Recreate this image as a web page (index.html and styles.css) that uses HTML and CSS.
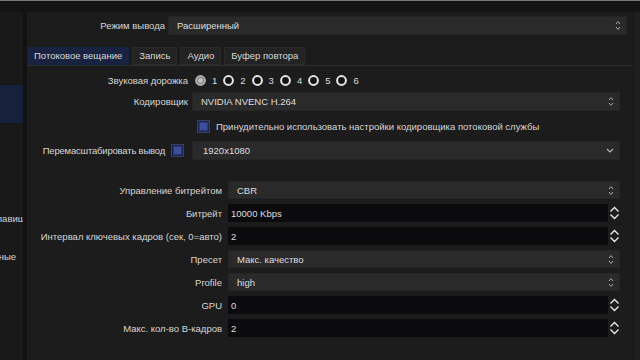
FILE: index.html
```html
<!DOCTYPE html>
<html lang="ru">
<head>
    <meta charset="UTF-8">
    <meta name="viewport" content="width=device-width, initial-scale=1.0">
    <title>Настройки — Вывод</title>
    <link rel="stylesheet" href="styles.css">
</head>
<body>

    <div class="topbar"></div>

    <div class="window">

        <aside class="sidebar">
            <ul class="nav">
                <li></li>
                <li></li>
                <li class="active"></li>
                <li></li>
                <li></li>
                <li>Горячие клавиши</li>
                <li>Расширенные</li>
            </ul>
        </aside>

        <main class="settings">

            <div class="form form-top">
                <label class="lbl">Режим вывода</label>
                <div class="combo">
                    <span>Расширенный</span>
                    <svg class="updown" width="6" height="11" viewBox="0 0 6 11"><path d="M1 4 L3 1.6 L5 4 M1 7 L3 9.4 L5 7"/></svg>
                </div>
            </div>

            <div class="tabs">
                <div class="tab active">Потоковое вещание</div>
                <div class="tab">Запись</div>
                <div class="tab">Аудио</div>
                <div class="tab">Буфер повтора</div>
            </div>

            <div class="form form-stream">
                <label class="lbl">Звуковая дорожка</label>
                <div class="radios">
                    <span class="radio checked"><svg width="11" height="11" viewBox="0 0 11 11"><circle cx="5.5" cy="5.5" r="4.6" class="ring-on"/><circle cx="5.5" cy="5.5" r="2.3" class="dot"/></svg>1</span>
                    <span class="radio"><svg width="11" height="11" viewBox="0 0 11 11"><circle cx="5.5" cy="5.5" r="4.4" class="ring"/></svg>2</span>
                    <span class="radio"><svg width="11" height="11" viewBox="0 0 11 11"><circle cx="5.5" cy="5.5" r="4.4" class="ring"/></svg>3</span>
                    <span class="radio"><svg width="11" height="11" viewBox="0 0 11 11"><circle cx="5.5" cy="5.5" r="4.4" class="ring"/></svg>4</span>
                    <span class="radio"><svg width="11" height="11" viewBox="0 0 11 11"><circle cx="5.5" cy="5.5" r="4.4" class="ring"/></svg>5</span>
                    <span class="radio"><svg width="11" height="11" viewBox="0 0 11 11"><circle cx="5.5" cy="5.5" r="4.4" class="ring"/></svg>6</span>
                </div>

                <label class="lbl">Кодировщик</label>
                <div class="combo">
                    <span>NVIDIA NVENC H.264</span>
                    <svg class="updown" width="6" height="11" viewBox="0 0 6 11"><path d="M1 4 L3 1.6 L5 4 M1 7 L3 9.4 L5 7"/></svg>
                </div>

                <div class="check">
                    <span class="box"></span>
                    <span>Принудительно использовать настройки кодировщика потоковой службы</span>
                </div>

                <div class="lbl rescale">
                    <span>Перемасштабировать вывод</span>
                    <span class="box"></span>
                </div>
                <div class="combo editable">
                    <span>1920x1080</span>
                    <svg class="chevron" width="8" height="5" viewBox="0 0 8 5"><path d="M1 1 L4 4 L7 1"/></svg>
                </div>
            </div>

            <div class="form form-enc">
                <label class="lbl">Управление битрейтом</label>
                <div class="combo">
                    <span>CBR</span>
                    <svg class="updown" width="6" height="11" viewBox="0 0 6 11"><path d="M1 4 L3 1.6 L5 4 M1 7 L3 9.4 L5 7"/></svg>
                </div>

                <label class="lbl">Битрейт</label>
                <div class="spin">
                    <span class="spin-val">10000 Kbps</span>
                    <span class="spin-btns"><svg width="11" height="16" viewBox="0 0 11 16"><path d="M1.5 6.5 L5.5 2.5 L9.5 6.5 M1.5 9.5 L5.5 13.5 L9.5 9.5"/></svg></span>
                </div>

                <label class="lbl">Интервал ключевых кадров (сек, 0=авто)</label>
                <div class="spin">
                    <span class="spin-val">2</span>
                    <span class="spin-btns"><svg width="11" height="16" viewBox="0 0 11 16"><path d="M1.5 6.5 L5.5 2.5 L9.5 6.5 M1.5 9.5 L5.5 13.5 L9.5 9.5"/></svg></span>
                </div>

                <label class="lbl">Пресет</label>
                <div class="combo">
                    <span>Макс. качество</span>
                    <svg class="updown" width="6" height="11" viewBox="0 0 6 11"><path d="M1 4 L3 1.6 L5 4 M1 7 L3 9.4 L5 7"/></svg>
                </div>

                <label class="lbl">Profile</label>
                <div class="combo">
                    <span>high</span>
                    <svg class="updown" width="6" height="11" viewBox="0 0 6 11"><path d="M1 4 L3 1.6 L5 4 M1 7 L3 9.4 L5 7"/></svg>
                </div>

                <label class="lbl">GPU</label>
                <div class="spin">
                    <span class="spin-val">0</span>
                    <span class="spin-btns"><svg width="11" height="16" viewBox="0 0 11 16"><path d="M1.5 6.5 L5.5 2.5 L9.5 6.5 M1.5 9.5 L5.5 13.5 L9.5 9.5"/></svg></span>
                </div>

                <label class="lbl">Макс. кол-во B-кадров</label>
                <div class="spin">
                    <span class="spin-val">2</span>
                    <span class="spin-btns"><svg width="11" height="16" viewBox="0 0 11 16"><path d="M1.5 6.5 L5.5 2.5 L9.5 6.5 M1.5 9.5 L5.5 13.5 L9.5 9.5"/></svg></span>
                </div>
            </div>

        </main>

        <div class="scrollbar"></div>
    </div>

</body>
</html>
```

FILE: styles.css
```css
/* General */
body {
    margin: 0;
    width: 640px;
    height: 360px;
    overflow: hidden;
    background: #1c1c1c;
    font-family: "Liberation Sans", Arial, sans-serif;
    font-size: 9.5px;
    color: #d6d6d6;
}

.topbar {
    height: 11px;
    border-top: 1px solid #777;
    background: #141414;
}

.window {
    display: flex;
    height: 348px;
}

/* Sidebar (scrolled sideways, only the ends of long names show) */
.sidebar {
    width: 23px;
    background: #191919;
    border-right: 4px solid #121212;
    overflow: hidden;
}

.nav {
    list-style: none;
    width: 160px;
    margin: -3px 0 0 -46px;
    padding: 0;
}

.nav li {
    height: 38px;
    display: flex;
    align-items: center;
    white-space: nowrap;
    color: #d2d2d2;
}

.nav li.active {
    background: #16213b;
}

.settings {
    flex: 1;
}

.scrollbar {
    width: 6px;
    background: #1f1f1f;
    border-left: 1px solid #171717;
}

/* Form grids */
.form {
    display: grid;
    align-items: center;
}

.form-top {
    grid-template-columns: 138px 1fr;
    column-gap: 3px;
    grid-auto-rows: 19px;
    margin: 4px 6px 0 0;
}

.form-stream {
    grid-template-columns: 161px 1fr;
    grid-template-rows: 16px 19px 22px 19px;
    column-gap: 4px;
    row-gap: 4px;
    margin: 6px 13px 0 0;
}

.form-enc {
    grid-template-columns: 195px 1fr;
    grid-auto-rows: 18px;
    column-gap: 6px;
    row-gap: 5px;
    margin: 21px 13px 0 0;
}

.lbl {
    text-align: right;
    white-space: nowrap;
}

/* Tabs */
.tabs {
    display: flex;
    gap: 3px;
    margin-top: 12px;
    border-bottom: 1px solid #2e2e2e;
}

.tab {
    height: 18px;
    line-height: 18px;
    padding: 0 7px;
    background: #232323;
    box-shadow: inset 0 0 0 1px #2a2a2a;
    color: #d8d8d8;
}

.tab.active {
    background: #192341;
    box-shadow: none;
}

/* Combo boxes */
.combo {
    height: 100%;
    box-sizing: border-box;
    display: flex;
    align-items: center;
    justify-content: space-between;
    padding: 0 5px 0 8px;
    background: #2a2a2b;
    border: 1px solid #242424;
    color: #dedede;
}

.combo.editable {
    padding-left: 10px;
}

.updown path {
    fill: none;
    stroke: #a8a8a8;
    stroke-width: 1;
}

.chevron path {
    fill: none;
    stroke: #b8b8b8;
    stroke-width: 1.1;
}

/* Spin boxes */
.spin {
    height: 100%;
    display: flex;
}

.spin-val {
    flex: 1;
    display: flex;
    align-items: center;
    padding-left: 3px;
    background: #0b0b0e;
    color: #dedede;
}

.spin-btns {
    width: 12px;
    display: flex;
    align-items: center;
    justify-content: center;
}

.spin-btns path {
    fill: none;
    stroke: #ececec;
    stroke-width: 1.3;
}

/* Radios and checkboxes */
.radios {
    display: flex;
    align-items: center;
    padding-left: 3px;
}

.radio {
    display: flex;
    align-items: center;
    gap: 6px;
    margin-right: 6px;
    color: #dcdcdc;
}

.ring {
    fill: #141414;
    stroke: #e6e6e6;
    stroke-width: 2;
}

.ring-on {
    fill: #8c8c8c;
    stroke: #b2b2b2;
    stroke-width: 1.6;
}

.dot {
    fill: #c4c4c4;
}

.check {
    grid-column: 2;
    display: flex;
    align-items: center;
    gap: 6px;
    padding-left: 5px;
    white-space: nowrap;
}

.box {
    width: 13px;
    height: 13px;
    box-sizing: border-box;
    flex: none;
    border: 1px solid #34416f;
    background: #3d4f9b;
    box-shadow: inset 0 0 0 1.5px #1c2550;
}

.rescale {
    display: flex;
    justify-content: flex-end;
    align-items: center;
    gap: 6px;
    padding-right: 4px;
    letter-spacing: -0.2px;
}
```
